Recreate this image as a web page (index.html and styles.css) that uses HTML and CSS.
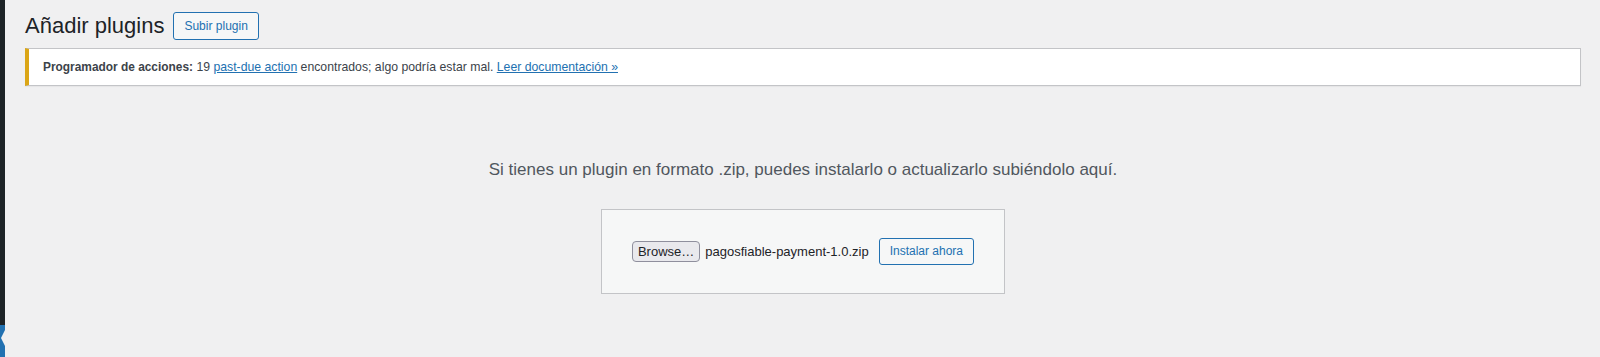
FILE: index.html
```html
<!DOCTYPE html>
<html lang="es">
<head>
<meta charset="utf-8">
<title>Añadir plugins</title>
<link rel="stylesheet" href="styles.css">
</head>
<body>
<div class="layout">
  <aside class="sidebar">
    <div class="sidebar-fill"></div>
    <div class="sidebar-current"><span class="notch"></span></div>
  </aside>
  <main class="content">
    <div class="title-row">
      <h1 class="page-title">Añadir plugins</h1>
      <a class="title-action" href="#">Subir plugin</a>
    </div>
    <div class="notice">
      <strong>Programador de acciones:</strong> 19 <a href="#">past-due action</a> encontrados; algo podría estar mal. <a href="#">Leer documentación »</a>
    </div>
    <p class="install-help">Si tienes un plugin en formato .zip, puedes instalarlo o actualizarlo subiéndolo aquí.</p>
    <div class="upload-wrap">
      <form class="upload-form">
        <span class="browse-btn">Browse…</span>
        <span class="file-name">pagosfiable-payment-1.0.zip</span>
        <button type="button" class="install-btn">Instalar ahora</button>
      </form>
    </div>
  </main>
</div>
</body>
</html>
```
FILE: styles.css
```css
html, body {
  margin: 0;
  padding: 0;
  height: 100%;
}
body {
  background: #f0f0f1;
  font-family: "Liberation Sans", Arial, sans-serif;
  color: #3c434a;
  overflow: hidden;
}
.layout {
  display: flex;
  height: 100vh;
}
.sidebar {
  width: 5px;
  flex: none;
  display: flex;
  flex-direction: column;
  background: #1d2327;
}
.sidebar-fill {
  flex: 1;
}
.sidebar-current {
  height: 32px;
  background: #2271b1;
  display: flex;
  justify-content: flex-end;
  align-items: flex-start;
  padding-top: 5px;
  box-sizing: border-box;
}
.notch {
  width: 0;
  height: 0;
  border-top: 8px solid transparent;
  border-bottom: 8px solid transparent;
  border-right: 4px solid #f0f0f1;
}
.content {
  flex: 1;
  padding: 0 19px 0 20px;
  min-width: 0;
}
.title-row {
  display: flex;
  align-items: center;
  margin-top: 12px;
  height: 28px;
}
.page-title {
  margin: 0;
  font-size: 22px;
  font-weight: 400;
  line-height: 28px;
  color: #1d2327;
}
.title-action {
  margin-left: 9px;
  height: 28px;
  box-sizing: border-box;
  padding: 0 10px;
  border: 1px solid #2271b1;
  border-radius: 3px;
  background: #f6f7f7;
  color: #2271b1;
  font-size: 12px;
  line-height: 26px;
  text-decoration: none;
}
.notice {
  margin-top: 8px;
  background: #fff;
  border: 1px solid #c3c4c7;
  border-left: 4px solid #dba617;
  box-shadow: 0 1px 1px rgba(0, 0, 0, 0.04);
  padding: 9px 14px;
  font-size: 12.25px;
  line-height: 18px;
  color: #3c434a;
}
.notice strong {
  color: #3c434a;
  font-size: 11.9px;
}
.notice a {
  color: #2271b1;
  text-decoration: underline;
}
.install-help {
  margin: 72px 0 0;
  text-align: center;
  font-size: 17px;
  line-height: 24px;
  color: #50575e;
}
.upload-wrap {
  margin-top: 27px;
  text-align: center;
}
.upload-form {
  display: inline-flex;
  align-items: center;
  margin: 0;
  padding: 28px 30px;
  background: #f6f7f7;
  border: 1px solid #c3c4c7;
}
.browse-btn {
  height: 21px;
  box-sizing: border-box;
  padding: 0 5px;
  border: 1px solid #8f8f9d;
  border-radius: 4px;
  background: #e9e9ed;
  color: #1d2327;
  font-size: 13px;
  line-height: 19px;
}
.file-name {
  margin-left: 5px;
  font-size: 13px;
  color: #1d2327;
}
.install-btn {
  margin-left: 10px;
  height: 27px;
  box-sizing: border-box;
  padding: 0 10px;
  border: 1px solid #2271b1;
  border-radius: 3px;
  background: #f6f7f7;
  color: #2271b1;
  font-family: "Liberation Sans", Arial, sans-serif;
  font-size: 12px;
  line-height: 25px;
}
```
